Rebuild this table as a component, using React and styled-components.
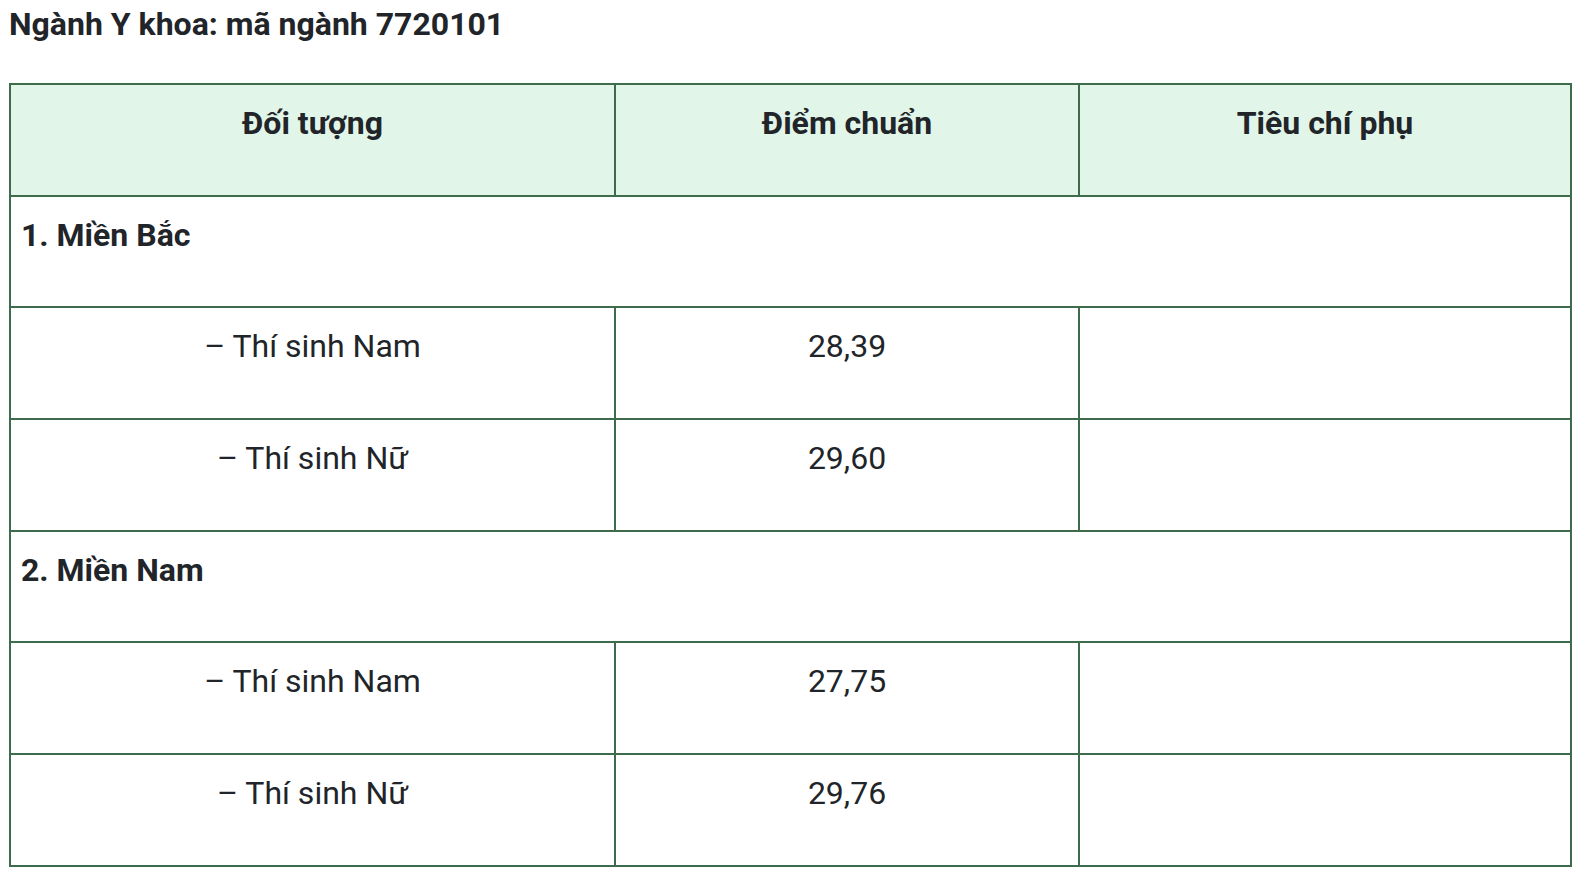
import styled, { createGlobalStyle } from 'styled-components';

const GlobalStyle = createGlobalStyle`
  * {
    box-sizing: border-box;
  }

  body {
    margin: 0;
    background: #ffffff;
    font-family: Roboto, "Noto Sans", "Liberation Sans", sans-serif;
    color: #212529;
  }
`;

const Page = styled.div`
  padding: 0 12px 0 9px;
`;

const Heading = styled.h3`
  margin: 0;
  padding: 5px 0 0 0;
  font-size: 32px;
  line-height: 39px;
  font-weight: 700;
  color: #212529;
`;

const ScoreTable = styled.table`
  margin-top: 39px;
  width: 1563px;
  table-layout: fixed;
  border-collapse: separate;
  border-spacing: 0;
  border-top: 2px solid #3d6b4b;
  border-left: 2px solid #3d6b4b;
`;

const Col = styled.col`
  width: ${props => props.width}px;
`;

const Cell = styled.td`
  height: 111.7px;
  padding: 14px 10px 0;
  vertical-align: top;
  text-align: ${props => (props.left ? 'left' : 'center')};
  font-size: 32px;
  line-height: 48px;
  font-weight: ${props => (props.bold ? 700 : 400)};
  color: #212529;
  background: ${props => (props.head ? '#e2f5e9' : '#ffffff')};
  border-right: 2px solid #3d6b4b;
  border-bottom: 2px solid #3d6b4b;
`;

const HeadCell = styled(Cell).attrs({ as: 'th', head: true, bold: true })``;

const groups = [
  {
    name: '1. Miền Bắc',
    rows: [
      { who: '– Thí sinh Nam', score: '28,39' },
      { who: '– Thí sinh Nữ', score: '29,60' },
    ],
  },
  {
    name: '2. Miền Nam',
    rows: [
      { who: '– Thí sinh Nam', score: '27,75' },
      { who: '– Thí sinh Nữ', score: '29,76' },
    ],
  },
];

const App = () => {
  return (
    <Page>
      <GlobalStyle />
      <Heading>Ngành Y khoa: mã ngành 7720101</Heading>
      <ScoreTable>
        <colgroup>
          <Col width={605} />
          <Col width={464} />
          <Col width={492} />
        </colgroup>
        <thead>
          <tr>
            <HeadCell>Đối tượng</HeadCell>
            <HeadCell>Điểm chuẩn</HeadCell>
            <HeadCell>Tiêu chí phụ</HeadCell>
          </tr>
        </thead>
        <tbody>
          {groups.map(group => (
            <>
              <tr key={group.name}>
                <Cell colSpan={3} left bold>{group.name}</Cell>
              </tr>
              {group.rows.map(row => (
                <tr key={group.name + row.who}>
                  <Cell>{row.who}</Cell>
                  <Cell>{row.score}</Cell>
                  <Cell></Cell>
                </tr>
              ))}
            </>
          ))}
        </tbody>
      </ScoreTable>
    </Page>
  );
};

export default App;
